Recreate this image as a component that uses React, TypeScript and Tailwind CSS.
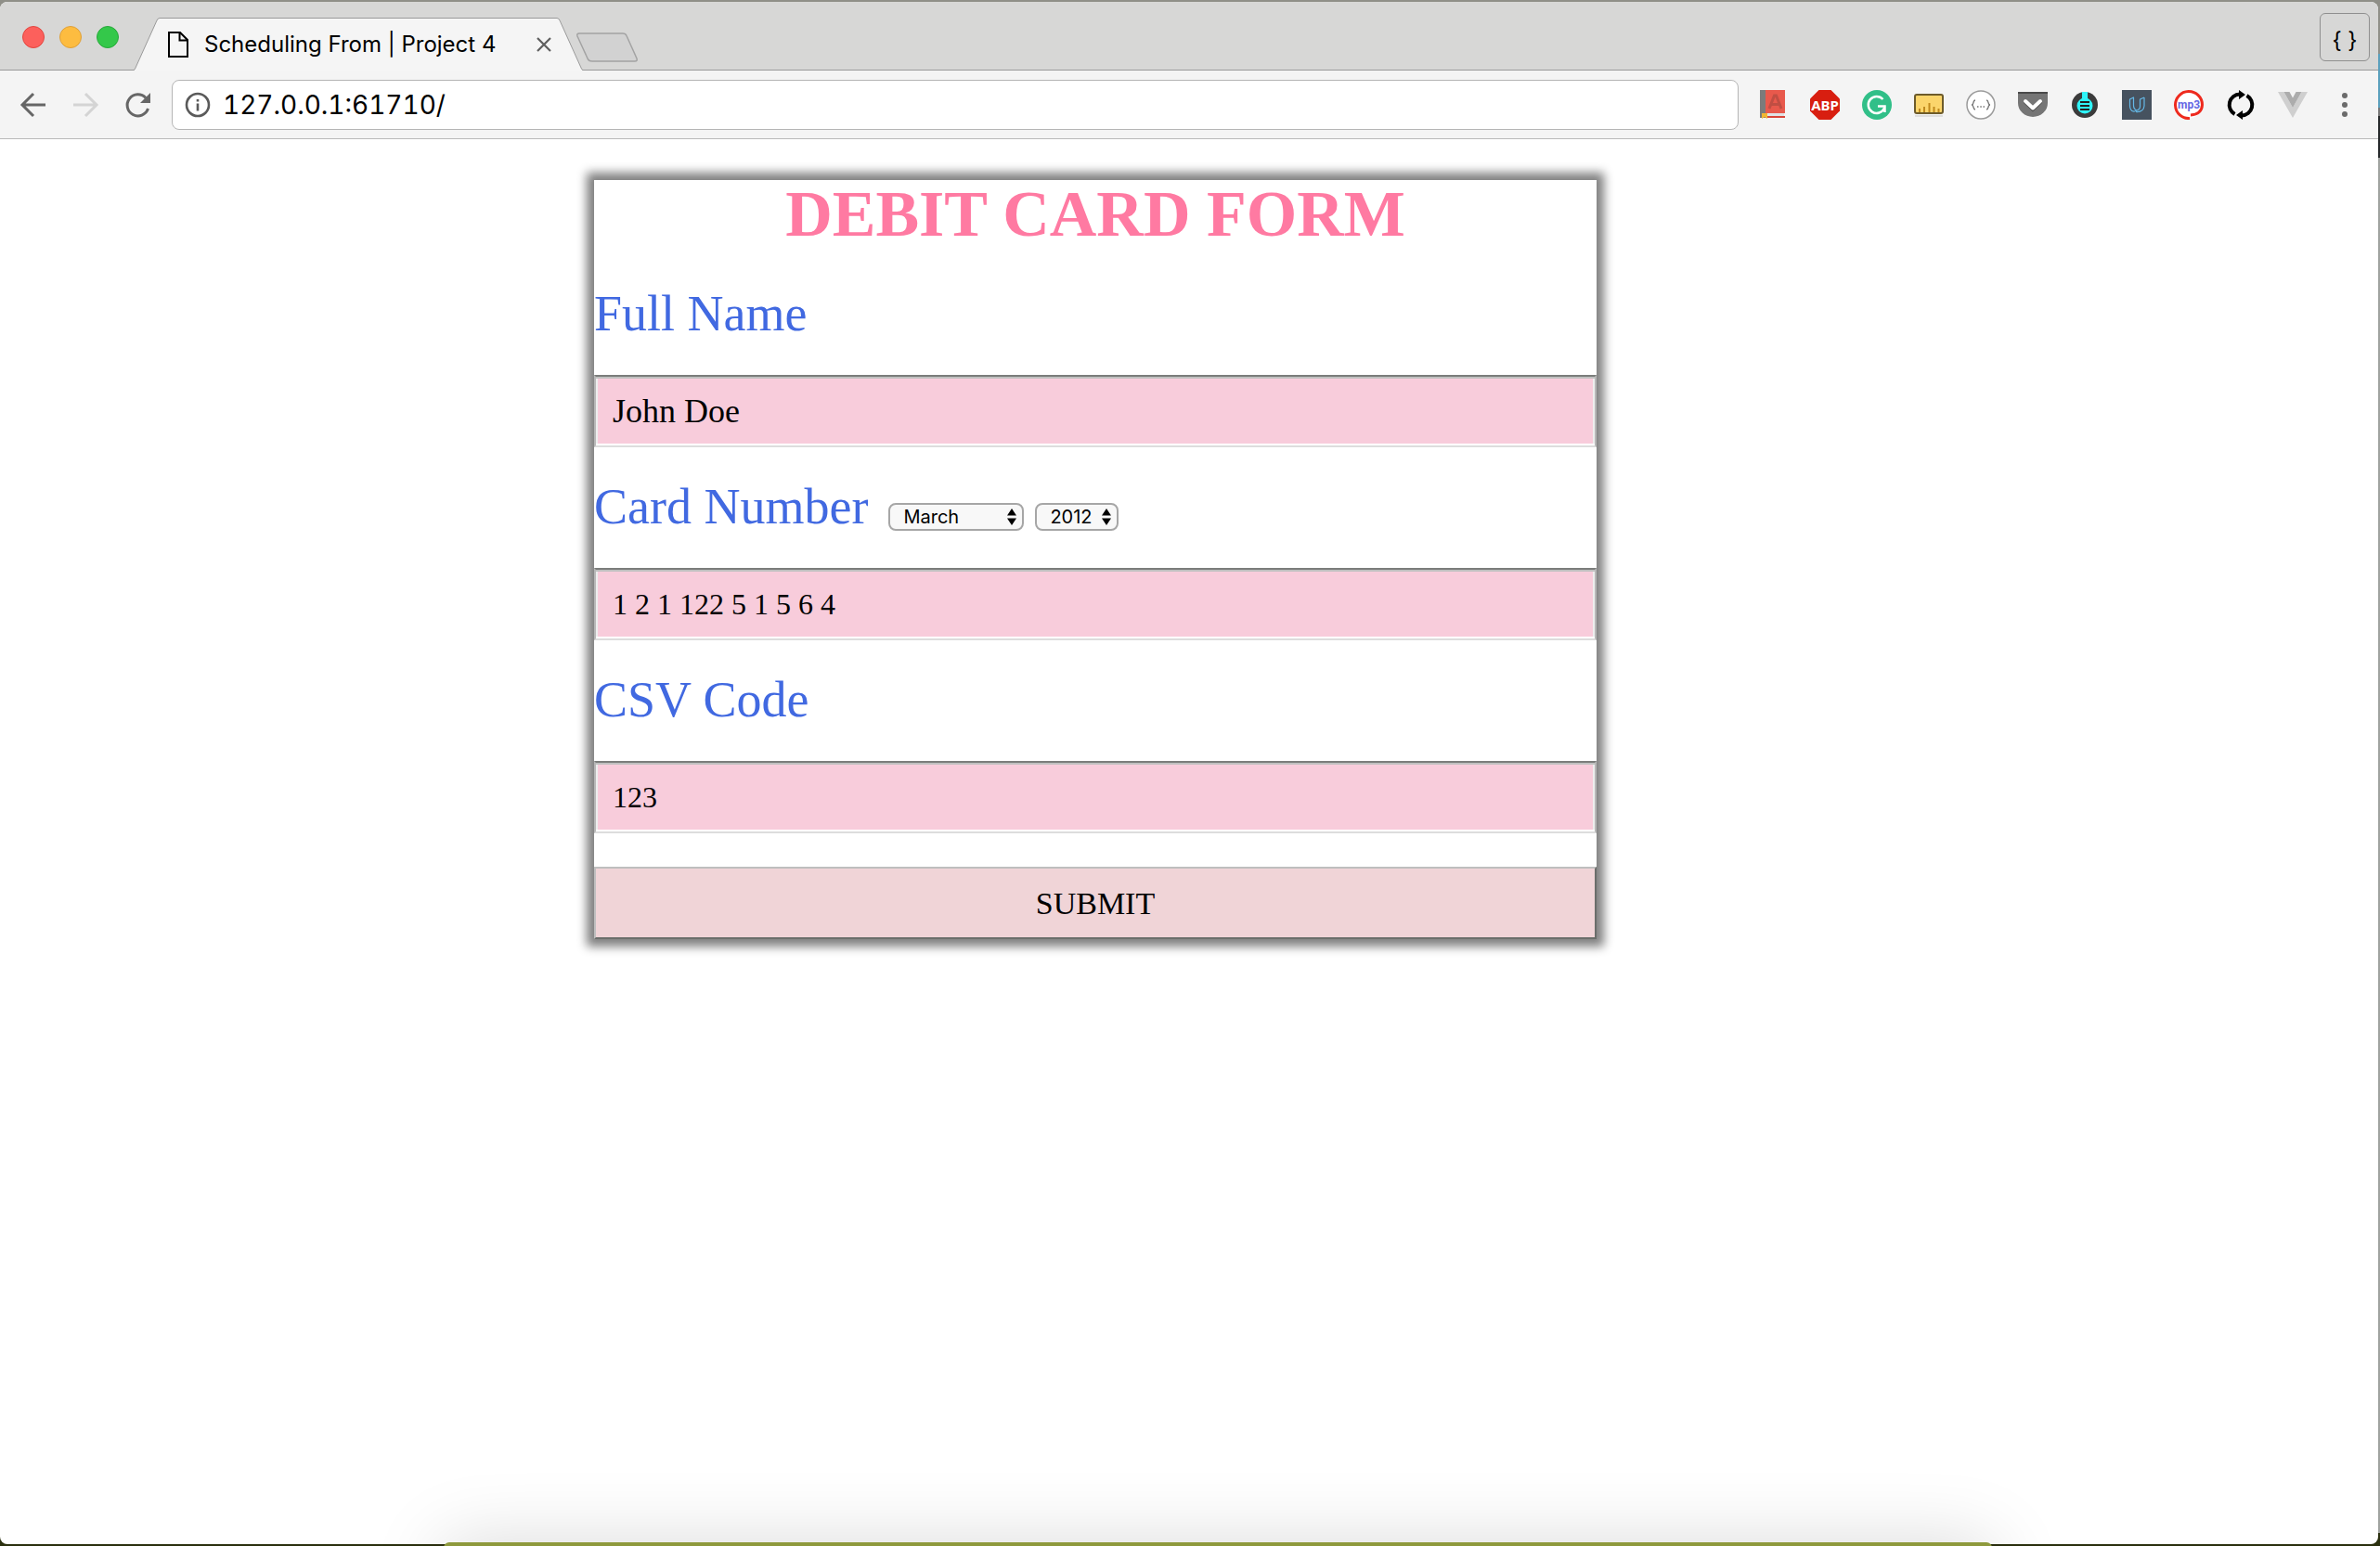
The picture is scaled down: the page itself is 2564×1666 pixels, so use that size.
import React from "react";

const tool = "flex w-14 h-8 shrink-0 items-center justify-center";

function Ext({ label, children }: { label: string; children: React.ReactNode }) {
  return (
    <button type="button" aria-label={label} className={tool}>
      <svg viewBox="0 0 32 32" className="h-8 w-8" fill="none">
        {children}
      </svg>
    </button>
  );
}

function Extensions() {
  return (
    <div className="flex shrink-0 items-center">
      <Ext label="Dictionary">
        <path d="M2 0H8V30H2Z" fill="#7b7b7b" />
        <path d="M8 0H29V25H8Z" fill="#e8594c" />
        <path d="M8 25H28V28H8Z" fill="#dfe3e6" />
        <path d="M8 28H29V30H8Z" fill="#d9463a" />
        <path d="M4 25H10V31L7 29L4 31Z" fill="#f2b632" />
        <path d="M12 20L17.500 6H19.500L25 20M14 15.500H23" stroke="#c04e43" strokeWidth="3" />
      </Ext>
      <Ext label="Adblock Plus">
        <path d="M9.500 0H22.500L32 9.500V22.500L22.500 32H9.500L0 22.500V9.500Z" fill="#d81e10" />
        <text x="16" y="21.500" textAnchor="middle" fontSize="15" fontWeight="700" fill="#fff" fontFamily="Noto Sans, sans-serif">ABP</text>
      </Ext>
      <Ext label="Grammarly">
        <circle cx="16" cy="16" r="16" fill="#31bf88" />
        <path d="M22.500 10A9 9 0 1 0 24 19.500M17 17.500H24.500V24" stroke="#fff" strokeWidth="2.500" />
      </Ext>
      <Ext label="Ruler">
        <rect x="1" y="5" width="30" height="20" rx="2" fill="#fbd56b" stroke="#6d5b2a" strokeWidth="2" />
        <path d="M6 24V20M11 24V18M16.500 24V14M21.500 24V18M26.500 24V20" stroke="#c08a1d" strokeWidth="2" />
        <path d="M1 28H31" stroke="#dedede" strokeWidth="2" />
      </Ext>
      <Ext label="JSON Formatter">
        <circle cx="16" cy="16" r="15" fill="#fff" stroke="#9b9b9b" strokeWidth="1.500" />
        <path d="M10 11C7 11 9 16 6 16C9 16 7 21 10 21M22 11C25 11 23 16 26 16C23 16 25 21 22 21" stroke="#777" strokeWidth="1.300" />
        <path d="M12 18H13.500M15.300 18H16.800M18.500 18H20" stroke="#777" strokeWidth="1.300" />
      </Ext>
      <Ext label="Pocket">
        <path d="M0 3Q0 2 1 2H31Q32 2 32 3V14A16 15 0 0 1 0 14Z" fill="#757575" />
        <path d="M0 3H32" stroke="#4a4a4a" strokeWidth="2" />
        <path d="M8 13L16 20.500L24 13" stroke="#444" strokeWidth="4" strokeLinecap="round" />
        <path d="M8 12L16 19.500L24 12" stroke="#fff" strokeWidth="4" strokeLinecap="round" strokeLinejoin="round" />
      </Ext>
      <Ext label="Reader">
        <circle cx="16" cy="16" r="14" fill="#3b3b3b" />
        <circle cx="16" cy="17" r="8.500" fill="#2ef3f7" />
        <path d="M13 2H19V11H13Z" fill="#2ef3f7" />
        <path d="M11 13H21M11 17H21M11 21H21" stroke="#222" strokeWidth="1.800" />
      </Ext>
      <Ext label="Udacity">
        <path d="M0 0H32V32H0Z" fill="#46525f" />
        <path d="M8.500 10L12.500 8V16.500Q12.500 20.500 16 22Q11.500 24.500 9.500 21Q8.500 19.500 8.500 17ZM24 8L19.500 10V17.500Q19.500 21 16 22M24 8V17Q23.500 24 15 23.500" stroke="#64b8e6" strokeWidth="1.200" strokeLinejoin="round" />
      </Ext>
      <Ext label="MP3 converter">
        <circle cx="16" cy="16" r="14.500" fill="#fff" />
        <path d="M17 30.500A14.500 14.500 0 1 1 30.500 16Q30 26 18 27" stroke="#ee2a1e" strokeWidth="3" />
        <text x="16" y="20" textAnchor="middle" fontSize="12" fontWeight="700" fill="#6468e4" fontFamily="Roboto, sans-serif">mp3</text>
      </Ext>
      <Ext label="Refresh">
        <path d="M9.500 26A11.500 11.500 0 0 1 15 4.500M22.500 6A11.500 11.500 0 0 1 17 27.500" stroke="#000" strokeWidth="4" />
        <path d="M14 0L21 5L14 10ZM18 22L11 27L18 32Z" fill="#000" />
      </Ext>
      <Ext label="Vue devtools">
        <path d="M0 2H6.500L16 19L25.500 2H32L16 30Z" fill="#cfcfcf" />
        <path d="M6.500 2H12.500L16 8.500L19.500 2H25.500L16 19Z" fill="#acacac" />
      </Ext>
      <Ext label="Menu">
        <circle cx="16" cy="6" r="3" fill="#6b6b6b" />
        <circle cx="16" cy="16" r="3" fill="#6b6b6b" />
        <circle cx="16" cy="26" r="3" fill="#6b6b6b" />
      </Ext>
    </div>
  );
}

function TabStrip() {
  return (
    <div className="flex h-[74px] items-end border-b border-[#9a9a9a] bg-[#d7d7d6]">
      <div className="flex h-[70px] w-36 shrink-0 items-center gap-4 pl-6">
        <button type="button" aria-label="Close window" className="h-6 w-6 rounded-full border border-[#e2463f] bg-[#fc605c]" />
        <button type="button" aria-label="Minimize window" className="h-6 w-6 rounded-full border border-[#dea03a] bg-[#fdbc40]" />
        <button type="button" aria-label="Zoom window" className="h-6 w-6 rounded-full border border-[#27a83a] bg-[#34c84a]" />
      </div>
      <div className="relative -mb-px h-[57px] w-[484px] shrink-0">
        <svg viewBox="0 0 484 57" className="absolute inset-0 h-full w-full" aria-hidden="true">
          <path d="M0 57Q1.500 56 2 54L25 3Q26 0.500 28 0.500H456Q458 0.500 459 3L482 54Q482.500 56 484 57Z" fill="#f5f5f5" />
          <path d="M0 56.500Q1.500 56 2 54L25 3Q26 0.500 28 0.500H456Q458 0.500 459 3L482 54Q482.500 56 484 56.500" fill="none" stroke="#9a9a9a" />
        </svg>
        <div className="relative flex h-full items-center pr-[34px] pl-[37px] pb-3 pt-1">
          <svg viewBox="0 0 22 28" className="mr-[17px] mt-2 h-7 w-[22px] shrink-0" fill="none" stroke="#000" strokeWidth="2" aria-hidden="true">
            <path d="M1 1H13L21 9V27H1ZM12.500 1V9.500H21" />
          </svg>
          <span className="mt-2 flex-1 whitespace-nowrap font-['Inter',sans-serif] text-[24px] leading-8 text-black">Scheduling From | Project 4</span>
          <button type="button" aria-label="Close tab" className="mt-2 h-4 w-4">
            <svg viewBox="0 0 16 16" stroke="#5f5f5f" strokeWidth="2.200">
              <path d="M1 1L15 15M15 1L1 15" />
            </svg>
          </button>
        </div>
      </div>
      <button type="button" aria-label="New tab" className="mb-2 -ml-2 h-8 w-[68px] shrink-0">
        <svg viewBox="0 0 68 32" className="h-full w-full">
          <path d="M4 1H51Q54 1 55 3.500L66 28Q67 31 64 31H18Q14 31 13 28L2 4Q1 1 4 1Z" fill="#d2d2d2" stroke="#a3a3a3" strokeWidth="1.500" />
        </svg>
      </button>
      <div className="flex flex-1 justify-end self-stretch pr-[9px] pt-3">
        <button type="button" aria-label="Developer profile" className="h-[52px] w-[54px] rounded-md border border-[#8f8f8f] pt-2 font-['Inter',sans-serif] text-[24px] leading-8 text-black">{"{ }"}</button>
      </div>
    </div>
  );
}

function Toolbar() {
  return (
    <div className="flex h-[74px] items-center border-b border-[#b9b9b9] bg-[#f4f4f4] pr-2">
      <div className="flex shrink-0 items-center gap-6 pl-5 pr-[19px]">
        <button type="button" aria-label="Back" className="h-8 w-8">
          <svg viewBox="0 0 32 32" fill="none" stroke="#666" strokeWidth="3">
            <path d="M16 4L4 16L16 28M4 16H29" />
          </svg>
        </button>
        <button type="button" aria-label="Forward" className="h-8 w-8">
          <svg viewBox="0 0 32 32" fill="none" stroke="#d4d4d4" strokeWidth="3">
            <path d="M16 4L28 16L16 28M28 16H3" />
          </svg>
        </button>
        <button type="button" aria-label="Reload" className="h-8 w-[34px]">
          <svg viewBox="0 0 34 32" fill="none">
            <path d="M27.500 20A11.500 11.500 0 1 1 25 8.500" stroke="#666" strokeWidth="3" />
            <path d="M30 3V14H19Z" fill="#666" />
          </svg>
        </button>
      </div>
      <div className="flex h-[54px] flex-1 items-center rounded-lg border border-[#b5b5b5] bg-white pl-3">
        <svg viewBox="0 0 30 30" className="mr-3 h-[30px] w-[30px] shrink-0" fill="none" aria-hidden="true">
          <circle cx="15" cy="15" r="12" stroke="#5a5a5a" strokeWidth="2.600" />
          <path d="M15 13.500V21.500M15 9V11.600" stroke="#5a5a5a" strokeWidth="2.600" />
        </svg>
        <input aria-label="Address" defaultValue="127.0.0.1:61710/" className="min-w-0 flex-1 bg-transparent font-['Inter',sans-serif] text-[28px] leading-9 text-black tabular-nums outline-none" />
      </div>
      <div className="pl-[9px]">
        <Extensions />
      </div>
    </div>
  );
}

function Picker({ label, value, options, className }: { label: string; value: string; options: string[]; className: string }) {
  return (
    <span className={className}>
      <select
        aria-label={label}
        defaultValue={value}
        className="h-[30px] w-full appearance-none rounded-lg border-2 border-[#a6a6a6] bg-[#f8f8f8] pl-3.5 font-['Inter',sans-serif] text-[20px] leading-[26px] text-black"
      >
        {options.map((o) => (
          <option key={o}>{o}</option>
        ))}
      </select>
      <svg viewBox="0 0 10 18" className="pointer-events-none absolute top-1/2 right-2 h-[18px] w-2.5 -translate-y-1/2" fill="#000" aria-hidden="true">
        <path d="M5 0L10 7.500H0ZM5 18L10 10.500H0Z" />
      </svg>
    </span>
  );
}

function Field({ id, label, value, inputClass, children }: { id: string; label: string; value: string; inputClass: string; children?: React.ReactNode }) {
  return (
    <div>
      <div className="flex items-baseline pt-[34px] pb-9">
        <label htmlFor={id} className="whitespace-nowrap text-[54px] leading-[60px] text-[#4169e1]">{label}</label>
        {children}
      </div>
      <input id={id} defaultValue={value} className={inputClass} />
    </div>
  );
}

const box =
  "block h-[78px] w-full border-2 border-t-[#7b7d7b] border-l-[#b8b8b8] border-r-[#b8b8b8] border-b-[#dddddd] bg-[#f8ccdb] px-[18px] text-black outline-none shadow-[inset_0_2px_#c0c0c0,inset_0_-2px_#fff,inset_2px_0_#eeeeee,inset_-2px_0_#eeeeee]";

export default function App() {
  return (
    <div className="relative flex min-h-screen flex-col overflow-hidden bg-[linear-gradient(#8f8f88_58px,#5aa0bd_58px,#5aa0bd_116px,#777777_116px,#777777_125px,#25282a_125px,#25282a_170px,#a0a3a0_170px,#a0a3a0_calc(100%-14px),#2b300f_calc(100%-14px))] pt-0.5 pr-0.5 pb-0.5">
      <div className="flex flex-1 flex-col overflow-hidden rounded-lg bg-white">
        <TabStrip />
        <Toolbar />
        <main className="flex-1 pt-11">
          <form
            onSubmit={(e) => e.preventDefault()}
            className="ml-[24.98%] w-[1080px] bg-white font-['Liberation_Serif',serif] shadow-[0_0_10px_8px_#808080]"
          >
            <h1 className="pb-1.5 text-center text-[70px] leading-[74px] font-bold text-[#ff7aa2]">DEBIT CARD FORM</h1>
            <Field id="name" label="Full Name" value="John Doe" inputClass={box + " text-[36px]"} />
            <Field id="card" label="Card Number" value="1 2 1 122 5 1 5 6 4" inputClass={box + " text-[32px]"}>
              <Picker label="Month" value="March" options={["January", "February", "March", "April"]} className="relative ml-[22px] w-[146px]" />
              <Picker label="Year" value="2012" options={["2010", "2011", "2012", "2013"]} className="relative ml-3 w-[90px]" />
            </Field>
            <Field id="csv" label="CSV Code" value="123" inputClass={box + " text-[32px]"} />
            <button type="submit" className="mt-9 block h-[78px] w-full border-2 border-t-[#bfbfbf] border-r-[#6b6e6b] border-b-[#6b6e6b] border-l-[#bfbfbf] bg-[#f0d4d7] text-[34px] text-black">
              SUBMIT
            </button>
          </form>
        </main>
      </div>
      <div className="absolute right-[418px] -bottom-24 left-[478px] h-[100px] rounded-t-md bg-[#8e993c] shadow-[0_0_80px_rgba(0,0,0,0.15)]" />
    </div>
  );
}
